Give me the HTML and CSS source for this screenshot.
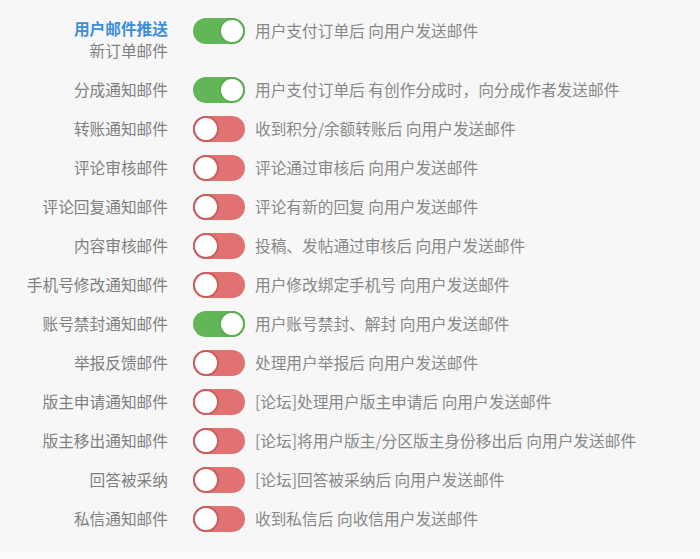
FILE: index.html
```html
<!DOCTYPE html>
<html lang="zh-CN">
<head>
    <meta charset="UTF-8">
    <meta name="viewport" content="width=device-width, initial-scale=1.0">
    <title>邮件通知设置</title>
    <link rel="stylesheet" href="styles.css">
</head>
<body>
    <div class="panel">
        <!-- 用户邮件推送 -->
        <div class="row first">
            <div class="label">
                <div class="group-title">用户邮件推送</div>
                <div class="sub-label">新订单邮件</div>
            </div>
            <span class="switch on"><span class="knob"></span></span>
            <span class="desc">用户支付订单后 向用户发送邮件</span>
        </div>
        <div class="row">
            <div class="label">分成通知邮件</div>
            <span class="switch on"><span class="knob"></span></span>
            <span class="desc">用户支付订单后 有创作分成时，向分成作者发送邮件</span>
        </div>
        <div class="row">
            <div class="label">转账通知邮件</div>
            <span class="switch"><span class="knob"></span></span>
            <span class="desc">收到积分/余额转账后 向用户发送邮件</span>
        </div>
        <div class="row">
            <div class="label">评论审核邮件</div>
            <span class="switch"><span class="knob"></span></span>
            <span class="desc">评论通过审核后 向用户发送邮件</span>
        </div>
        <div class="row">
            <div class="label">评论回复通知邮件</div>
            <span class="switch"><span class="knob"></span></span>
            <span class="desc">评论有新的回复 向用户发送邮件</span>
        </div>
        <div class="row">
            <div class="label">内容审核邮件</div>
            <span class="switch"><span class="knob"></span></span>
            <span class="desc">投稿、发帖通过审核后 向用户发送邮件</span>
        </div>
        <div class="row">
            <div class="label">手机号修改通知邮件</div>
            <span class="switch"><span class="knob"></span></span>
            <span class="desc">用户修改绑定手机号 向用户发送邮件</span>
        </div>
        <div class="row">
            <div class="label">账号禁封通知邮件</div>
            <span class="switch on"><span class="knob"></span></span>
            <span class="desc">用户账号禁封、解封 向用户发送邮件</span>
        </div>
        <div class="row">
            <div class="label">举报反馈邮件</div>
            <span class="switch"><span class="knob"></span></span>
            <span class="desc">处理用户举报后 向用户发送邮件</span>
        </div>
        <div class="row">
            <div class="label">版主申请通知邮件</div>
            <span class="switch"><span class="knob"></span></span>
            <span class="desc">[论坛]处理用户版主申请后 向用户发送邮件</span>
        </div>
        <div class="row">
            <div class="label">版主移出通知邮件</div>
            <span class="switch"><span class="knob"></span></span>
            <span class="desc">[论坛]将用户版主/分区版主身份移出后 向用户发送邮件</span>
        </div>
        <div class="row">
            <div class="label">回答被采纳</div>
            <span class="switch"><span class="knob"></span></span>
            <span class="desc">[论坛]回答被采纳后 向用户发送邮件</span>
        </div>
        <div class="row">
            <div class="label">私信通知邮件</div>
            <span class="switch"><span class="knob"></span></span>
            <span class="desc">收到私信后 向收信用户发送邮件</span>
        </div>
    </div>
</body>
</html>
```

FILE: styles.css
```css
body {
    font-family: "Noto Sans CJK SC", "Noto Sans", sans-serif;
    font-size: 15.7px;
    background-color: #fbfbfb;
    margin: 0;
    padding: 0;
}

.panel {
    background-color: #f7f7f7;
    padding: 18px 0 22px 0;
    height: 513px;
}

.row {
    display: flex;
    align-items: flex-start;
    margin-bottom: 13px;
}

.row.first {
    margin-bottom: 15px;
}

.label {
    width: 168px;
    text-align: right;
    color: #808080;
    line-height: 25px;
    flex-shrink: 0;
}

.group-title {
    color: #3b8fd9;
    font-weight: bold;
    line-height: 22px;
}

.sub-label {
    line-height: 22px;
}

.switch {
    position: relative;
    box-sizing: border-box;
    width: 52px;
    height: 26px;
    margin-left: 25px;
    border-radius: 13px;
    background-color: #e27171;
    flex-shrink: 0;
}

.switch.on {
    background-color: #62b657;
}

.knob {
    position: absolute;
    top: 0;
    left: 0;
    box-sizing: border-box;
    width: 26px;
    height: 26px;
    border-radius: 50%;
    background-color: #fff;
    border: 2px solid #c85f5f;
}

.switch.on .knob {
    left: 26px;
    border-color: #5aae4f;
}

.desc {
    margin-left: 10px;
    color: #888;
    line-height: 25px;
}
```
